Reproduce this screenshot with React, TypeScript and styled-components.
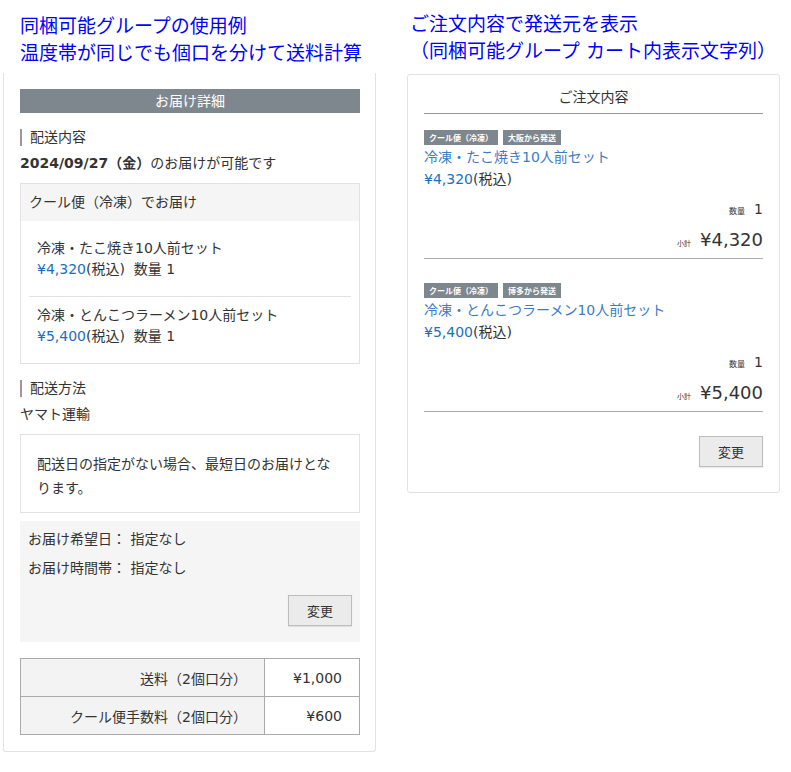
import React from "react";
import styled, { createGlobalStyle } from "styled-components";

const Global = createGlobalStyle`
  html, body { margin: 0; padding: 0; background: #fff; }
  body {
    font-family: "DejaVu Sans", "Noto Sans CJK JP", sans-serif;
    color: #333;
    font-size: 14px;
  }
  * { box-sizing: border-box; }
`;

const Page = styled.div`
  display: flex;
  align-items: flex-start;
  gap: 31px;
  padding-left: 3px;
  width: 791px;
`;

const Column = styled.div`
  width: 373px;
  display: flex;
  flex-direction: column;
`;

const Caption = styled.h2<{ $indent: number; $top: number; $gap: number }>`
  margin: ${(p) => p.$top}px 0 ${(p) => p.$gap}px ${(p) => p.$indent}px;
  font-size: 19px;
  line-height: 27px;
  font-weight: normal;
  color: #0000ff;
  white-space: nowrap;
`;

const LeftPanel = styled.div`
  border: 1px solid #e2e2e2;
  border-top: none;
  border-radius: 0 0 3px 3px;
  padding: 16px 15px 16px 16px;
`;

const Banner = styled.div`
  background: #7f878e;
  color: #fff;
  text-align: center;
  height: 24px;
  line-height: 24px;
  font-size: 14px;
`;

const SectionTitle = styled.div`
  margin-top: 16px;
  border-left: 2px solid #999;
  padding-left: 8px;
  height: 17px;
  line-height: 17px;
  font-size: 14px;
`;

const Line = styled.div`
  margin-top: 7px;
  line-height: 20px;
  font-size: 14px;
`;

const Strong = styled.span`
  font-weight: bold;
`;

const Box = styled.div`
  margin-top: 10px;
  border: 1px solid #e2e2e2;
`;

const BoxHead = styled.div`
  background: #f5f5f5;
  padding: 8px;
  line-height: 21px;
`;

const BoxList = styled.div`
  padding: 9px 8px 0;
`;

const BoxItem = styled.div`
  padding: 8px 8px 16px;
  & + & { border-top: 1px solid #e2e2e2; }
  line-height: 21px;
`;

const Price = styled.span`
  color: #1b6fc0;
`;

const Note = styled.div`
  margin-top: 10px;
  border: 1px solid #e2e2e2;
  padding: 17px 16px 12px;
  line-height: 24px;
`;

const GrayBox = styled.div`
  margin-top: 8px;
  background: #f5f5f5;
  padding: 8px 8px 16px;
  display: flex;
  flex-direction: column;
`;

const GrayRow = styled.div`
  line-height: 21px;
  margin-bottom: 8px;
`;

const Button = styled.button`
  align-self: flex-end;
  width: 64px;
  height: 31px;
  margin-top: 8px;
  background: #ebebeb;
  border: 1px solid #bdbdbd;
  box-shadow: 0 1px 1px rgba(0, 0, 0, 0.08);
  font-family: "Noto Sans CJK JP", sans-serif;
  font-size: 13px;
  color: #333;
  padding: 0;
`;

const Table = styled.table`
  margin-top: 16px;
  width: 340px;
  border-collapse: collapse;
  font-size: 14px;
`;

const Th = styled.td`
  width: 244px;
  background: #f3f3f3;
  border: 1px solid #aaa;
  text-align: right;
  padding: 0 17px 0 8px;
  height: 38px;
`;

const Td = styled.td`
  border: 1px solid #aaa;
  text-align: right;
  padding: 0 17px 0 8px;
  height: 38px;
`;

const RightPanel = styled.div`
  border: 1px solid #e2e2e2;
  border-radius: 3px;
  padding: 12px 16px 25px;
  display: flex;
  flex-direction: column;
`;

const OrderTitle = styled.div`
  text-align: center;
  line-height: 20px;
  padding-bottom: 6px;
  border-bottom: 1px solid #999;
  font-size: 14px;
`;

const OrderItem = styled.div`
  padding-top: 16px;
  border-bottom: 1px solid #aaa;
  & + & { padding-top: 24px; }
`;

const Tags = styled.div`
  display: flex;
  gap: 5px;
  margin-bottom: 1px;
`;

const Tag = styled.span`
  background: #7f878e;
  color: #fff;
  font-family: "Noto Sans CJK JP", sans-serif;
  font-size: 8px;
  font-weight: bold;
  height: 15px;
  line-height: 15px;
  padding: 0 5px;
`;

const ItemName = styled.div`
  color: #3d7cc4;
  line-height: 22px;
`;

const ItemPrice = styled.div`
  line-height: 22px;
`;

const QtyRow = styled.div`
  margin-top: 9px;
  height: 20px;
  line-height: 20px;
  text-align: right;
`;

const Tiny = styled.span<{ $size: number }>`
  font-family: "Noto Sans CJK JP", sans-serif;
  font-size: ${(p) => p.$size}px;
  line-height: 1;
  margin-right: 9px;
`;

const SubRow = styled.div`
  margin-top: 10px;
  height: 24px;
  line-height: 24px;
  text-align: right;
  box-sizing: content-box;
  padding-bottom: 5px;
`;

const Big = styled.span`
  font-size: 18px;
  line-height: 1;
`;

const RightButton = styled(Button)`
  margin-top: 24px;
`;

const leftItems = [
  { name: "冷凍・たこ焼き10人前セット", price: "¥4,320" },
  { name: "冷凍・とんこつラーメン10人前セット", price: "¥5,400" },
];

const orders = [
  { from: "大阪から発送", name: "冷凍・たこ焼き10人前セット", price: "¥4,320" },
  { from: "博多から発送", name: "冷凍・とんこつラーメン10人前セット", price: "¥5,400" },
];

export default function App() {
  return (
    <>
      <Global />
      <Page>
        <Column>
          <Caption $indent={17} $top={13} $gap={6}>
            同梱可能グループの使用例
            <br />
            温度帯が同じでも個口を分けて送料計算
          </Caption>
          <LeftPanel>
            <Banner>お届け詳細</Banner>
            <SectionTitle>配送内容</SectionTitle>
            <Line>
              <Strong>2024/09/27（金）</Strong>のお届けが可能です
            </Line>
            <Box>
              <BoxHead>クール便（冷凍）でお届け</BoxHead>
              <BoxList>
                {leftItems.map((it) => (
                  <BoxItem key={it.name}>
                    <div>{it.name}</div>
                    <div>
                      <Price>{it.price}</Price>(税込)&nbsp; 数量 1
                    </div>
                  </BoxItem>
                ))}
              </BoxList>
            </Box>
            <SectionTitle>配送方法</SectionTitle>
            <Line>ヤマト運輸</Line>
            <Note>配送日の指定がない場合、最短日のお届けとなります。</Note>
            <GrayBox>
              <GrayRow>お届け希望日： 指定なし</GrayRow>
              <GrayRow>お届け時間帯： 指定なし</GrayRow>
              <Button>変更</Button>
            </GrayBox>
            <Table>
              <tbody>
                <tr>
                  <Th>送料（2個口分）</Th>
                  <Td>¥1,000</Td>
                </tr>
                <tr>
                  <Th>クール便手数料（2個口分）</Th>
                  <Td>¥600</Td>
                </tr>
              </tbody>
            </Table>
          </LeftPanel>
        </Column>
        <Column>
          <Caption $indent={3} $top={11} $gap={9}>
            ご注文内容で発送元を表示
            <br />
            （同梱可能グループ カート内表示文字列）
          </Caption>
          <RightPanel>
            <OrderTitle>ご注文内容</OrderTitle>
            {orders.map((o) => (
              <OrderItem key={o.name}>
                <Tags>
                  <Tag>クール便（冷凍）</Tag>
                  <Tag>{o.from}</Tag>
                </Tags>
                <ItemName>{o.name}</ItemName>
                <ItemPrice>
                  <Price>{o.price}</Price>(税込)
                </ItemPrice>
                <QtyRow>
                  <Tiny $size={8}>数量</Tiny>
                  <span>1</span>
                </QtyRow>
                <SubRow>
                  <Tiny $size={7}>小計</Tiny>
                  <Big>{o.price}</Big>
                </SubRow>
              </OrderItem>
            ))}
            <RightButton>変更</RightButton>
          </RightPanel>
        </Column>
      </Page>
    </>
  );
}
